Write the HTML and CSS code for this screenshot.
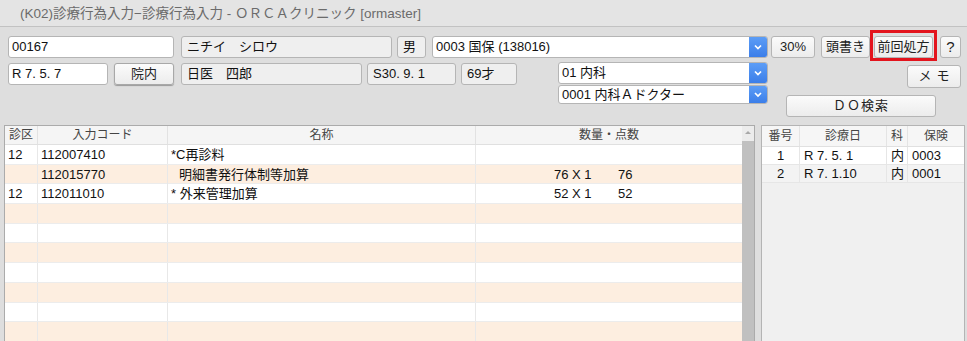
FILE: index.html
```html
<!DOCTYPE html>
<html lang="ja">
<head>
<meta charset="utf-8">
<title>診療行為入力</title>
<link rel="stylesheet" href="styles.css">
</head>
<body>
<div class="titlebar">(K02)診療行為入力−診療行為入力 - ＯＲＣＡクリニック [ormaster]</div>

<div class="head">
  <div class="row1">
    <div class="field edit w-id">00167</div>
    <div class="field ro w-kana">ニチイ　シロウ</div>
    <div class="field ro w-sex">男</div>
    <div class="select w-ins"><span class="sel-text">0003 国保 (138016)</span><span class="dd"><svg width="18" height="22" viewBox="0 0 18 22"><polyline points="6,9.5 9,12.5 12,9.5" fill="none" stroke="#fff" stroke-width="1.7"/></svg></span></div>
    <div class="btn w-rate">30%</div>
    <div class="btn w-head">頭書き</div>
    <div class="btn w-prev hl">前回処方</div>
    <div class="btn w-help">?</div>
  </div>
  <div class="lower">
    <div class="row2">
      <div class="field edit w-date">R 7. 5. 7</div>
      <div class="btn raised w-in">院内</div>
      <div class="field ro w-name">日医　四郎</div>
      <div class="field ro w-birth">S30. 9. 1</div>
      <div class="field ro w-age">69才</div>
    </div>
    <div class="selcol">
      <div class="select w-dept"><span class="sel-text">01 内科</span><span class="dd"><svg width="18" height="22" viewBox="0 0 18 22"><polyline points="6,9.5 9,12.5 12,9.5" fill="none" stroke="#fff" stroke-width="1.7"/></svg></span></div>
      <div class="select w-dept short"><span class="sel-text">0001 内科Ａドクター</span><span class="dd"><svg width="18" height="19" viewBox="0 0 18 19"><polyline points="6,8 9,11 12,8" fill="none" stroke="#fff" stroke-width="1.7"/></svg></span></div>
    </div>
    <div class="rightcol">
      <div class="btn w-memo">メモ</div>
      <div class="btn w-do">ＤＯ検索</div>
    </div>
  </div>
</div>

<div class="tables">
  <div class="panel left">
    <div class="grid">
      <div class="thead">
        <div class="th">診区</div>
        <div class="th">入力コード</div>
        <div class="th">名称</div>
        <div class="th">数量・点数</div>
      </div>
      <div class="tr">
        <div class="td">12</div><div class="td">112007410</div><div class="td">*C再診料</div><div class="td"></div>
      </div>
      <div class="tr alt">
        <div class="td"></div><div class="td">112015770</div><div class="td indent">明細書発行体制等加算</div><div class="td qty"><span class="q1">76 X 1</span><span class="q2">76</span></div>
      </div>
      <div class="tr">
        <div class="td">12</div><div class="td">112011010</div><div class="td">* 外来管理加算</div><div class="td qty"><span class="q1">52 X 1</span><span class="q2">52</span></div>
      </div>
      <div class="tr alt"><div class="td"></div><div class="td"></div><div class="td"></div><div class="td"></div></div>
      <div class="tr"><div class="td"></div><div class="td"></div><div class="td"></div><div class="td"></div></div>
      <div class="tr alt"><div class="td"></div><div class="td"></div><div class="td"></div><div class="td"></div></div>
      <div class="tr"><div class="td"></div><div class="td"></div><div class="td"></div><div class="td"></div></div>
      <div class="tr alt"><div class="td"></div><div class="td"></div><div class="td"></div><div class="td"></div></div>
      <div class="tr"><div class="td"></div><div class="td"></div><div class="td"></div><div class="td"></div></div>
      <div class="tr alt"><div class="td"></div><div class="td"></div><div class="td"></div><div class="td"></div></div>
    </div>
    <div class="scrollbar">
      <div class="sb-up"><svg width="12" height="15" viewBox="0 0 12 15"><polygon points="3,8 9,8 6,5" fill="#a8a8a8"/></svg></div>
      <div class="sb-thumb"></div>
    </div>
  </div>
  <div class="panel right">
    <div class="rhead">
      <div class="rth">番号</div>
      <div class="rth">診療日</div>
      <div class="rth">科</div>
      <div class="rth">保険</div>
    </div>
    <div class="rtr first">
      <div class="rtd c">1</div><div class="rtd">R 7. 5. 1</div><div class="rtd">内</div><div class="rtd">0003</div>
    </div>
    <div class="rtr second">
      <div class="rtd c">2</div><div class="rtd">R 7. 1.10</div><div class="rtd">内</div><div class="rtd">0001</div>
    </div>
  </div>
</div>
</body>
</html>
```

FILE: styles.css
```css
html, body {
  margin: 0;
  padding: 0;
}
body {
  width: 967px;
  height: 341px;
  overflow: hidden;
  background: #dedede;
  font-family: "Liberation Sans", "Noto Sans CJK JP", sans-serif;
  font-size: 13px;
  color: #111;
}

.titlebar {
  height: 26px;
  line-height: 27px;
  padding-left: 20px;
  background: #e4e4e4;
  border-bottom: 1px solid #c2c2c2;
  color: #6b6b6b;
  font-size: 13.5px;
}

.head {
  padding-top: 9px;
  padding-left: 8px;
}

.row1 {
  display: flex;
  height: 22px;
}

.field, .btn, .select {
  box-sizing: border-box;
  height: 22px;
  border: 1px solid #b5b5b5;
  border-radius: 3px;
  line-height: 20px;
  white-space: nowrap;
}
.field {
  padding-left: 3px;
}
.field.edit { background: #fff; }
.field.ro { background: #efefef; padding-left: 5px; }

.btn {
  background: linear-gradient(#fbfbfb, #ececec);
  text-align: center;
  color: #222;
}
.btn.raised {
  box-shadow: 0 1px 1px #9a9a9a;
  border-color: #a8a8a8;
}

.select {
  display: flex;
  background: #fff;
  overflow: hidden;
}
.sel-text {
  flex: 1;
  padding-left: 3px;
}
.dd {
  width: 18px;
  background: linear-gradient(#5c9df6, #3b7ee9);
  display: flex;
  align-items: center;
  justify-content: center;
}
.dd svg { display: block; }

.w-id { width: 166px; }
.w-kana { width: 211px; margin-left: 7px; }
.w-sex { width: 29px; margin-left: 5px; }
.w-ins { width: 336px; margin-left: 6px; }
.w-rate { width: 44px; margin-left: 3px; }
.w-head { width: 49px; margin-left: 6px; }
.w-prev { width: 59px; margin-left: 4px; }
.w-help { width: 21px; margin-left: 7px; font-size: 15px; }

.hl { position: relative; }
.hl::after {
  content: "";
  position: absolute;
  left: -5px;
  right: -5px;
  top: -7px;
  bottom: -4px;
  border: 3px solid #e3141d;
}

.lower {
  display: flex;
  margin-top: 4px;
  align-items: flex-start;
}
.row2 {
  display: flex;
  padding-top: 1px;
}
.w-date { width: 100px; }
.w-in { width: 60px; margin-left: 6px; }
.w-name { width: 181px; margin-left: 7px; }
.w-birth { width: 89px; margin-left: 5px; }
.w-age { width: 56px; margin-left: 5px; }

.selcol {
  margin-left: 41px;
  display: flex;
  flex-direction: column;
  gap: 1px;
}
.w-dept { width: 210px; }
.w-dept.short { height: 19px; line-height: 17px; }

.rightcol {
  margin-left: 18px;
  width: 175px;
  display: flex;
  flex-direction: column;
  align-items: flex-end;
}
.w-memo {
  width: 54px;
  margin-top: 3px;
  letter-spacing: 5px;
  text-indent: 5px;
  height: 23px;
}
.w-do {
  align-self: flex-start;
  width: 150px;
  margin-top: 7px;
  letter-spacing: 1px;
}

.tables {
  display: flex;
  margin-top: 8px;
  padding-left: 4px;
}
.panel {
  box-sizing: border-box;
  height: 216px;
  border: 1px solid #ababab;
  border-bottom: none;
  overflow: hidden;
}
.panel.left {
  width: 751px;
  display: flex;
  background: #f0f0f0;
}
.grid {
  width: 737px;
}
.thead, .tr {
  display: grid;
  grid-template-columns: 33px 130px 308px 266px;
}
.thead {
  height: 19px;
  box-sizing: border-box;
  background: #f5f5f5;
  border-bottom: 1px solid #e0e0e0;
}
.th {
  text-align: center;
  font-size: 12px;
  line-height: 18px;
  color: #444;
  border-right: 1px solid #e2e2e2;
}
.th:last-child { border-right: none; }

.tr {
  height: 19.7px;
  box-sizing: border-box;
  background: #fff;
  border-bottom: 1px solid #ececec;
}
.tr.alt { background: #fdeee0; }
.td {
  padding-left: 3px;
  line-height: 19px;
  border-right: 1px solid #e8e8e8;
  white-space: nowrap;
}
.td:last-child { border-right: none; }
.td.indent { padding-left: 11px; }
.q1 { display: inline-block; margin-left: 75px; width: 64px; }
.q2 { display: inline-block; }

.scrollbar {
  width: 12px;
  display: flex;
  flex-direction: column;
  background: #ececec;
}
.sb-up {
  height: 15px;
}
.sb-up svg { display: block; }
.sb-thumb {
  flex: 1;
  background: #c0c0c0;
}

.panel.right {
  width: 204px;
  margin-left: 6px;
  background: #f0f0f0;
  border-color: #b4b4b4;
}
.rhead, .rtr {
  display: grid;
  grid-template-columns: 38px 87px 21px 56px;
}
.rhead {
  height: 21px;
  box-sizing: border-box;
  background: #f6f6f6;
  border-bottom: 1px solid #e0e0e0;
}
.rth {
  text-align: center;
  font-size: 12px;
  line-height: 20px;
  color: #444;
  border-right: 1px solid #e4e4e4;
}
.rth:last-child { border-right: none; }
.rtr {
  height: 18px;
  box-sizing: border-box;
  border-bottom: 1px solid #e6e6e6;
}
.rtr.first { background: #fff; }
.rtr.second { background: #f3f3f3; }
.rtd {
  padding-left: 4px;
  line-height: 17px;
  border-right: 1px solid #e6e6e6;
  white-space: nowrap;
}
.rtd:last-child { border-right: none; }
.rtd.c { text-align: center; padding-left: 0; }
```
